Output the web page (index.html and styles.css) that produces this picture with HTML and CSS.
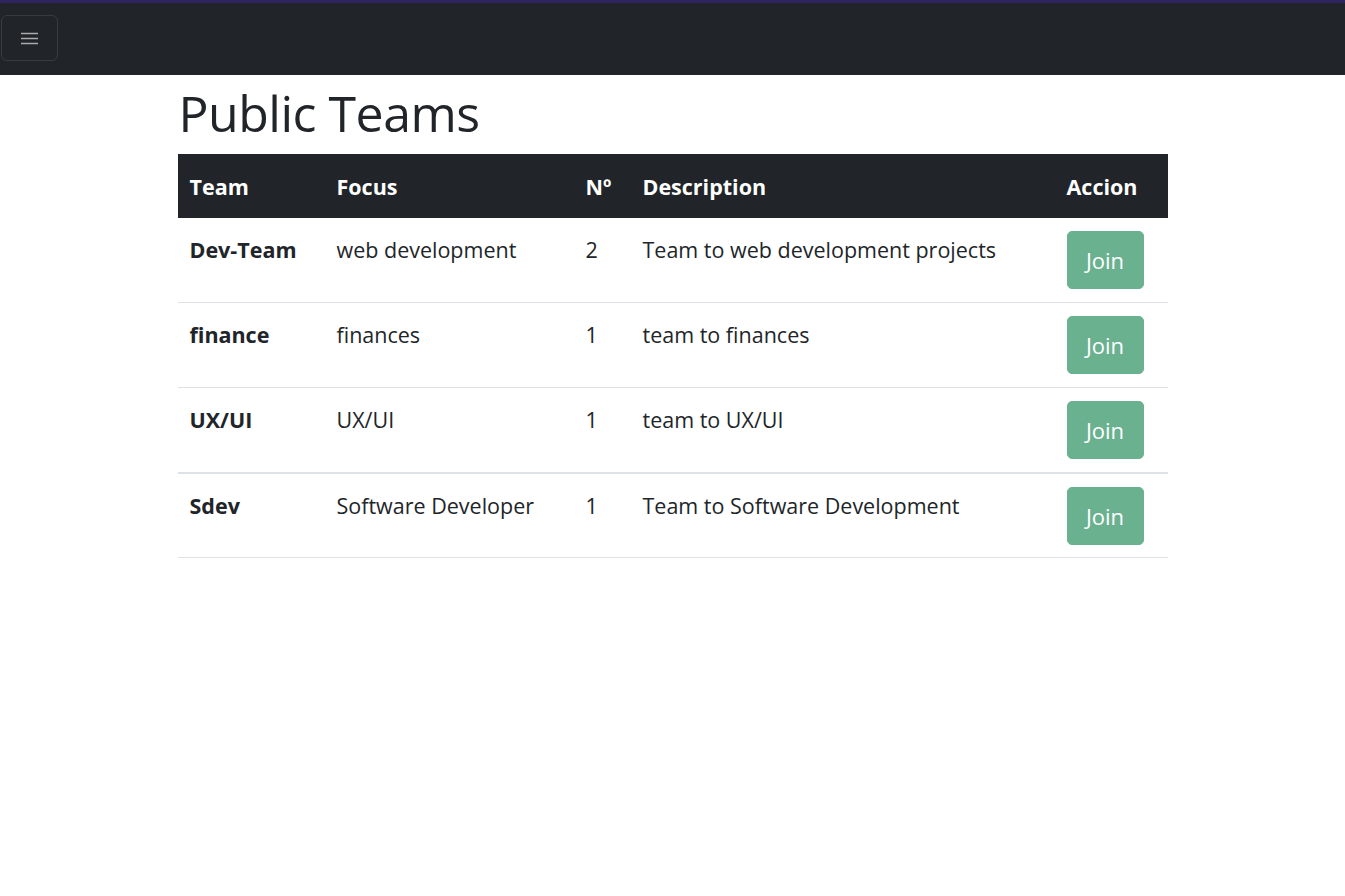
FILE: index.html
```html
<!DOCTYPE html>
<html lang="en">
<head>
<meta charset="utf-8">
<title>Public Teams</title>
<link rel="stylesheet" href="styles.css">
</head>
<body>
<nav class="navbar">
  <button class="toggler" type="button" aria-label="Toggle navigation">
    <svg width="17" height="13" viewBox="0 0 17 13" class="toggler-icon">
      <path d="M0 1.5h17M0 6.5h17M0 11.5h17" stroke="#a9abad" stroke-width="1.6"/>
    </svg>
  </button>
</nav>
<main class="container">
  <h1 class="title">Public Teams</h1>
  <table class="teams">
    <colgroup>
      <col class="c-team"><col class="c-focus"><col class="c-num"><col class="c-desc"><col class="c-act">
    </colgroup>
    <thead>
      <tr><th>Team</th><th>Focus</th><th>Nº</th><th>Description</th><th>Accion</th></tr>
    </thead>
    <tbody>
      <tr><th>Dev-Team</th><td>web development</td><td>2</td><td>Team to web development projects</td><td><button class="join" disabled>Join</button></td></tr>
      <tr><th>finance</th><td>finances</td><td>1</td><td>team to finances</td><td><button class="join" disabled>Join</button></td></tr>
      <tr class="thick"><th>UX/UI</th><td>UX/UI</td><td>1</td><td>team to UX/UI</td><td><button class="join" disabled>Join</button></td></tr>
      <tr class="last"><th>Sdev</th><td>Software Developer</td><td>1</td><td>Team to Software Development</td><td><button class="join" disabled>Join</button></td></tr>
    </tbody>
  </table>
</main>
</body>
</html>
```
FILE: styles.css
```css
* { box-sizing: border-box; }
html, body { margin: 0; padding: 0; }
body {
  font-family: "Open Sans", "Noto Sans", "Liberation Sans", sans-serif;
  color: #212529;
  background: #fff;
}
.navbar {
  height: 75px;
  background: #212529;
  border-top: 3px solid #2f2360;
  display: flex;
  align-items: flex-start;
  padding-top: 12px;
}
.toggler {
  width: 57px;
  height: 46px;
  margin-left: 1px;
  background: transparent;
  border: 1px solid #383c40;
  border-radius: 6px;
  display: flex;
  align-items: center;
  justify-content: center;
  padding: 0;
}
.container {
  width: 990px;
  margin: 0 auto;
}
.title {
  font-size: 50px;
  font-weight: 500;
  line-height: 66px;
  margin: 5px 0 8px 1px;
  letter-spacing: -0.5px;
}
.teams {
  width: 990px;
  border-collapse: collapse;
  table-layout: fixed;
  font-size: 21.5px;
}
.c-team { width: 147px; }
.c-focus { width: 249px; }
.c-num { width: 57px; }
.c-desc { width: 424px; }
.c-act { width: 113px; }
.teams thead th {
  background: #212529;
  color: #fff;
  font-weight: 700;
  text-align: left;
  height: 64px;
  padding: 0 12px;
  vertical-align: middle;
}
.teams tbody th,
.teams tbody td {
  text-align: left;
  vertical-align: top;
  padding: 13px 12px 13px 12px;
  line-height: 37px;
  border-bottom: 1px solid #dee2e6;
}
.teams tbody th { font-weight: 700; }
.teams tbody tr.thick th,
.teams tbody tr.thick td { border-bottom: 2px solid #dee2e6; }
.teams tbody tr.last th,
.teams tbody tr.last td { padding-bottom: 12px; }
.join {
  font-family: inherit;
  font-size: 22px;
  color: #fff;
  background: #6ab190;
  border: 1px solid #6ab190;
  border-radius: 5px;
  width: 77px;
  height: 58px;
  padding: 0;
  line-height: 1;
}
```
